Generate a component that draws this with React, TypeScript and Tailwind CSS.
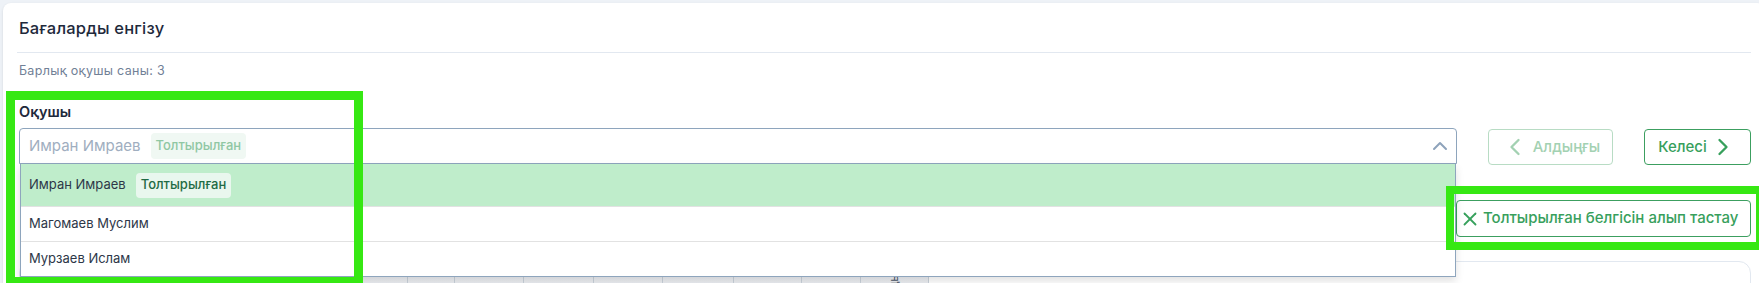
import React from 'react';
import { ChevronUp, ChevronLeft, ChevronRight, X } from 'lucide-react';

const students = [
  { name: 'Имран Имраев', filled: true },
  { name: 'Магомаев Муслим', filled: false },
  { name: 'Мурзаев Ислам', filled: false },
];

// table head under the open list, only its top edge shows
const headCols = [
  { w: 'w-[343px]', t: 'Оқушы' },
  { w: 'w-[45px]', t: 'Тапсырма' },
  { w: 'w-[47px]', t: 'БЖБ 1' },
  { w: 'w-[69px]', t: 'БЖБ 2' },
  { w: 'w-[70px]', t: 'ТЖБ.' },
  { w: 'w-[69px]', t: 'Жиынтық.' },
  { w: 'w-[71px]', t: 'Сабақ' },
  { w: 'w-[68px]', t: 'Бөлім' },
  { w: 'w-[59px]', t: 'Бағаä' },
  { w: 'w-[68px]', t: 'Қорытындыi' },
];

const App: React.FC = () => {
  return (
    <div className="relative w-[1759px] h-[283px] overflow-hidden bg-[#eef2f7] font-['Inter',sans-serif]">
      <div className="ml-[3px] mt-[3px] w-[1762px] min-h-[320px] rounded-lg bg-white px-[14px] shadow-sm">
        <div className="h-[50px] pt-[2px] pl-[2px] flex items-center border-b border-[#e2e8f0]">
          <h2 className="text-[16.5px] font-medium tracking-[0.2px] text-[#1e293b]">Бағаларды енгізу</h2>
        </div>

        <div className="pl-[2px]">
          <p className="mt-[8px] text-[12.5px] tracking-[0.3px] leading-[20px] text-[#718096]">Барлық оқушы саны: 3</p>

          <div className="mt-[21px] flex items-end gap-[31px]">
            <div className="flex-1">
              <label className="block mb-[6px] text-[14.5px] leading-[20px] font-semibold text-[#1e293b]">Оқушы</label>
              <div className="relative h-[36px] rounded-t-[4px] border border-[#8ea5bd] bg-white flex items-center pl-[9px] pr-[4px]">
                <span className="text-[15px] text-[#a0aec0]">Имран Имраев</span>
                <span className="ml-[10px] h-[26px] px-[5px] rounded-[4px] bg-[#f0f8f3] text-[13px] font-medium text-[#8fc7a3] flex items-center">
                  Толтырылған
                </span>
                <ChevronUp size={24} strokeWidth={2} className="ml-auto text-[#8ea3bb]" />

                <div className="absolute left-0 right-0 top-[35px] z-10 bg-white border-x border-b border-[#8ea5bd] shadow-[0_4px_8px_rgba(0,0,0,0.12)]">
                  {students.map((s, i) => (
                    <div
                      key={s.name}
                      className={
                        i === 0
                          ? 'h-[43px] bg-[#bfedcb] border-b border-[#e2e2e2] flex items-center pl-[8px]'
                          : i === 1
                          ? 'h-[35px] border-b border-[#e2e2e2] flex items-center pl-[8px]'
                          : 'h-[34px] flex items-center pl-[8px]'
                      }
                    >
                      <span className="text-[13px] text-[#2d3748]">{s.name}</span>
                      {s.filled && (
                        <span className="ml-[10px] h-[25px] px-[5px] rounded-[4px] bg-[#e9f7ee] text-[13px] font-medium text-[#1f6b45] flex items-center">
                          Толтырылған
                        </span>
                      )}
                    </div>
                  ))}
                </div>
              </div>
            </div>

            <div className="flex gap-[31px] mb-[-1px]">
              <button className="w-[125px] h-[36px] rounded-[4px] border border-[#b8dcc4] text-[15px] font-medium text-[#a3d1b2] flex items-center justify-center gap-[4px]">
                <ChevronLeft size={28} strokeWidth={2} />
                Алдыңғы
              </button>
              <button className="w-[107px] h-[36px] rounded-[4px] border border-[#3c9f60] text-[15px] font-medium text-[#37a05c] flex items-center justify-center gap-[2px]">
                Келесі
                <ChevronRight size={28} strokeWidth={2} />
              </button>
            </div>
          </div>

          <div className="mt-[36px] flex justify-end">
            <button className="w-[295px] h-[37px] rounded-[4px] border border-[#3c9f60] pl-[2px] text-[15px] font-medium text-[#37a05c] flex items-center gap-[2px]">
              <X size={22} strokeWidth={2} />
              Толтырылған белгісін алып тастау
            </button>
          </div>

          <div className="mt-[24px] h-[120px] rounded-xl border border-[#e2e8f0] pt-[15px]">
            <div className="flex h-[60px]">
              {headCols.map((c) => (
                <div
                  key={c.w}
                  className={`${c.w} h-full bg-gradient-to-b from-[#eceef2] to-[#dfe3e8] border-r border-[#c9d1da] flex justify-center pt-[2px] overflow-hidden`}
                >
                  <span className="text-[11px] leading-none text-[#4a5568] [writing-mode:vertical-rl] rotate-180">{c.t}</span>
                </div>
              ))}
            </div>
          </div>
        </div>
      </div>

      {/* highlight frames */}
      <div className="absolute left-[6px] top-[91px] w-[357px] h-[195px] border-[9px] border-[#36e813] z-20" />
      <div className="absolute left-[1446px] top-[186px] w-[318px] h-[64px] border-[8px] border-[#36e813] z-20" />
    </div>
  );
};

export default App;
